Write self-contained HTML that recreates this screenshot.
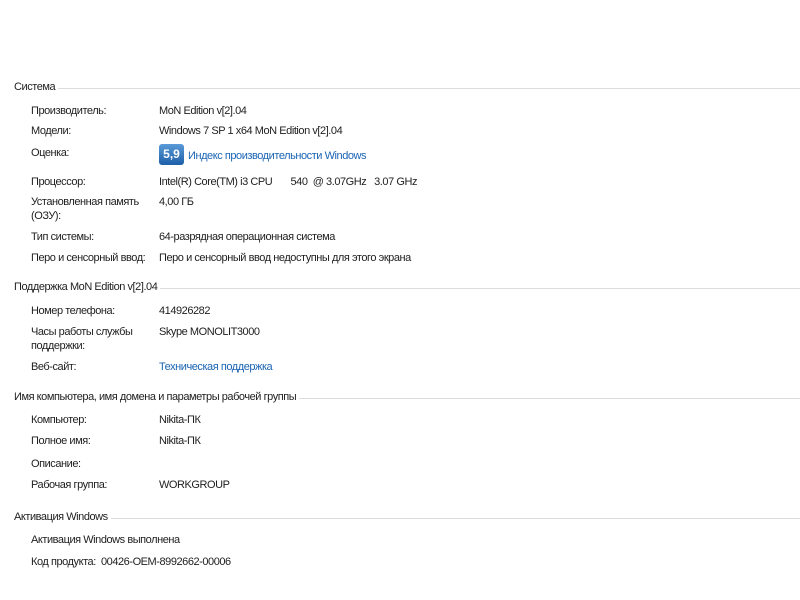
<!DOCTYPE html>
<html><head><meta charset="utf-8"><style>
html,body{margin:0;padding:0;background:#fff;width:800px;height:600px;overflow:hidden}
body{position:relative;font-family:"Liberation Sans",sans-serif;font-size:11px;color:#1e1e1e;letter-spacing:-0.45px}
.t{position:absolute;line-height:14px;white-space:nowrap}
.h{position:absolute;left:14px;right:0;height:14px;line-height:14px;display:flex;align-items:center;white-space:nowrap}
.h::after{content:"";flex:1;height:1px;background:#dcdcdc;margin-left:3px;margin-top:2px}
.l{left:31px}.v{left:159px}
.a{color:#1a64b4}
.b{position:absolute;left:159px;top:144px;width:25px;height:21px;border-radius:3px;background:linear-gradient(#5a9ad8,#1d5fa8);color:#fff;font-weight:bold;font-size:12px;line-height:21px;text-align:center;letter-spacing:0}
</style></head><body>
<div class="h" style="top:80px">Система</div>
<div class="t l" style="top:104px">Производитель:</div><div class="t v" style="top:104px">MoN Edition v[2].04</div>
<div class="t l" style="top:124px">Модели:</div><div class="t v" style="top:124px">Windows 7 SP 1 x64 MoN Edition v[2].04</div>
<div class="t l" style="top:146px">Оценка:</div><div class="b">5,9</div><div class="t a" style="left:188px;top:149px">Индекс производительности Windows</div>
<div class="t l" style="top:175px">Процессор:</div><div class="t v" style="top:175px">Intel(R) Core(TM) i3 CPU&nbsp;&nbsp;&nbsp;&nbsp;&nbsp;&nbsp;&nbsp;540&nbsp; @ 3.07GHz&nbsp;&nbsp; 3.07 GHz</div>
<div class="t l" style="top:195px">Установленная память<br>(ОЗУ):</div><div class="t v" style="top:195px">4,00 ГБ</div>
<div class="t l" style="top:230px">Тип системы:</div><div class="t v" style="top:230px">64-разрядная операционная система</div>
<div class="t l" style="top:251px">Перо и сенсорный ввод:</div><div class="t v" style="top:251px">Перо и сенсорный ввод недоступны для этого экрана</div>
<div class="h" style="top:280px">Поддержка MoN Edition v[2].04</div>
<div class="t l" style="top:304px">Номер телефона:</div><div class="t v" style="top:304px">414926282</div>
<div class="t l" style="top:325px">Часы работы службы<br>поддержки:</div><div class="t v" style="top:325px">Skype MONOLIT3000</div>
<div class="t l" style="top:360px">Веб-сайт:</div><div class="t v a" style="top:360px">Техническая поддержка</div>
<div class="h" style="top:390px">Имя компьютера, имя домена и параметры рабочей группы</div>
<div class="t l" style="top:413px">Компьютер:</div><div class="t v" style="top:413px">Nikita-ПК</div>
<div class="t l" style="top:434px">Полное имя:</div><div class="t v" style="top:434px">Nikita-ПК</div>
<div class="t l" style="top:457px">Описание:</div>
<div class="t l" style="top:478px">Рабочая группа:</div><div class="t v" style="top:478px">WORKGROUP</div>
<div class="h" style="top:510px">Активация Windows</div>
<div class="t l" style="top:533px">Активация Windows выполнена</div>
<div class="t l" style="top:555px">Код продукта:&nbsp; 00426-OEM-8992662-00006</div>
</body></html>
